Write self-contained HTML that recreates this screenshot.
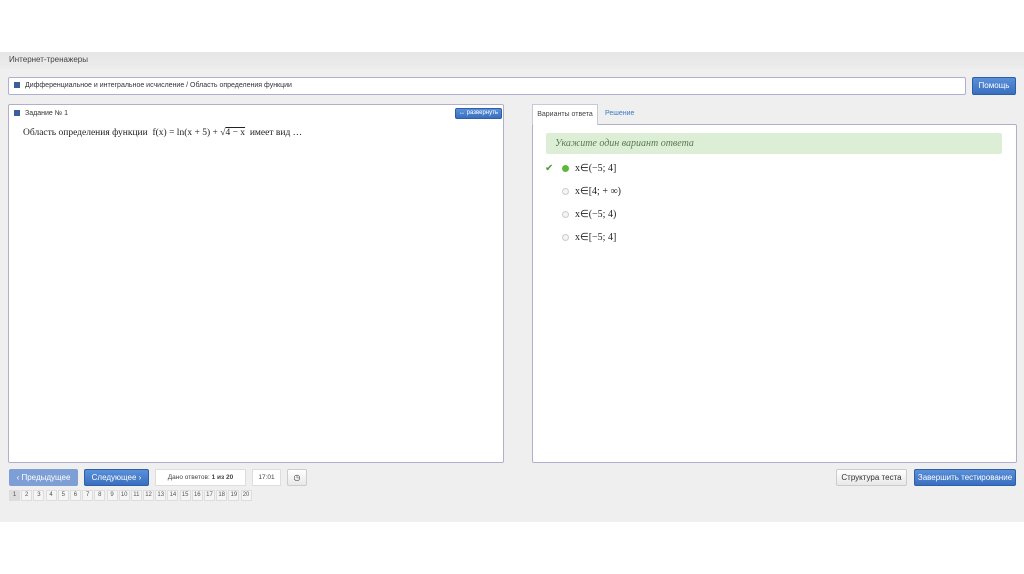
<!DOCTYPE html>
<html><head><meta charset="utf-8"><style>
*{box-sizing:border-box;margin:0;padding:0}
body{width:1024px;height:574px;background:#fff;font-family:"Liberation Sans",sans-serif;position:relative;overflow:hidden}
.a{position:absolute}
.gray{left:0;top:52px;width:1024px;height:470px;background:#efefef}
.hdr{left:0;top:52px;width:1024px;height:17px;background:linear-gradient(#e6e6e6,#ececec);font-size:8px;color:#444;padding:3px 9px}
.box{background:#fff;border:1px solid #b0b0cc;border-radius:2px}
.btn{border-radius:2px;font-size:8px;text-align:center;color:#fff;background:linear-gradient(#5a8fd8,#3a6fc0);border:1px solid #2e5ea8}
.wbtn{border-radius:2px;font-size:8px;text-align:center;color:#333;background:linear-gradient(#fff,#e8e8e8);border:1px solid #ccc}
.sq{display:inline-block;width:6px;height:6px;background:#3b5f9a;margin-right:5px;vertical-align:-1px}
.ser{font-family:"Liberation Serif",serif}
.opt{font-size:10px;color:#222}
.rad{position:absolute;left:562px;width:7px;height:7px;border-radius:50%;border:1px solid #ccc;background:#f4f4f4}
.pg{display:inline-block;width:11px;height:11px;border:1px solid #ddd;background:#f5f5f5;font-size:6px;color:#555;text-align:center;line-height:9px;margin-right:1.2px}
</style></head><body>
<div class="a gray"></div>
<div class="a hdr">Интернет-тренажеры</div>
<div class="a box" style="left:8px;top:77px;width:958px;height:18px;font-size:7px;color:#333;padding:4px 5px"><span class="sq"></span>Дифференциальное и интегральное исчисление / Область определения функции</div>
<div class="a btn" style="left:972px;top:77px;width:44px;height:18px;line-height:16px">Помощь</div>
<div class="a box" style="left:8px;top:104px;width:496px;height:359px;font-size:7px;color:#333;padding:5px 5px"><span class="sq"></span>Задание № 1
<div class="a btn" style="left:446px;top:3px;width:47px;height:11px;font-size:6px;line-height:9px">↔ развернуть</div>
<div class="a ser" style="left:14px;top:23px;font-size:9.5px;color:#222;white-space:nowrap">Область определения функции&nbsp; f(x) = ln(x + 5) + √<span style="text-decoration:overline">4 − x</span> &nbsp;имеет вид …</div>
</div>
<div class="a box" style="left:532px;top:124px;width:485px;height:339px"></div>
<div class="a" style="left:532px;top:104px;width:66px;height:21px;background:#fff;border:1px solid #c8c8d8;border-bottom:none;font-size:7px;color:#444;text-align:center;line-height:20px">Варианты ответа</div>
<div class="a" style="left:605px;top:110px;font-size:7px;color:#3a7ac8">Решение</div>
<div class="a" style="left:546px;top:133px;width:456px;height:21px;background:#dcefd6;border-radius:2px;font-family:'Liberation Serif',serif;font-style:italic;font-size:10px;color:#5a7a50;padding:5px 9px">Укажите один вариант ответа</div>
<div class="a" style="left:545px;top:163px;color:#4a9a30;font-size:10px">✔</div>
<div class="a" style="left:562px;top:165px;width:7px;height:7px;border-radius:50%;background:#5cb838"></div>
<div class="rad" style="top:188px"></div><div class="rad" style="top:211px"></div><div class="rad" style="top:234px"></div>
<div class="a ser opt" style="left:575px;top:163px">x∈(−5; 4]</div>
<div class="a ser opt" style="left:575px;top:186px">x∈[4; + ∞)</div>
<div class="a ser opt" style="left:575px;top:209px">x∈(−5; 4)</div>
<div class="a ser opt" style="left:575px;top:232px">x∈[−5; 4]</div>
<div class="a btn" style="left:9px;top:469px;width:69px;height:17px;line-height:15px;background:#7d9fd6;border-color:#7d9fd6">‹ Предыдущее</div>
<div class="a btn" style="left:84px;top:469px;width:65px;height:17px;line-height:15px">Следующее ›</div>
<div class="a" style="left:155px;top:469px;width:91px;height:17px;background:#fff;border:1px solid #ddd;font-size:6.5px;color:#444;text-align:center;line-height:15px">Дано ответов: <b>1 из 20</b></div>
<div class="a" style="left:252px;top:469px;width:29px;height:17px;background:#fff;border:1px solid #ddd;font-size:6.5px;color:#444;text-align:center;line-height:15px">17:01</div>
<div class="a wbtn" style="left:287px;top:469px;width:20px;height:17px;line-height:15px">◷</div>
<div class="a" style="left:9px;top:490px;white-space:nowrap;font-size:0"><span class="pg" style="background:#ddd">1</span><span class="pg">2</span><span class="pg">3</span><span class="pg">4</span><span class="pg">5</span><span class="pg">6</span><span class="pg">7</span><span class="pg">8</span><span class="pg">9</span><span class="pg">10</span><span class="pg">11</span><span class="pg">12</span><span class="pg">13</span><span class="pg">14</span><span class="pg">15</span><span class="pg">16</span><span class="pg">17</span><span class="pg">18</span><span class="pg">19</span><span class="pg">20</span></div>
<div class="a wbtn" style="left:836px;top:469px;width:71px;height:17px;line-height:15px">Структура теста</div>
<div class="a btn" style="left:914px;top:469px;width:102px;height:17px;line-height:15px">Завершить тестирование</div>
</body></html>
